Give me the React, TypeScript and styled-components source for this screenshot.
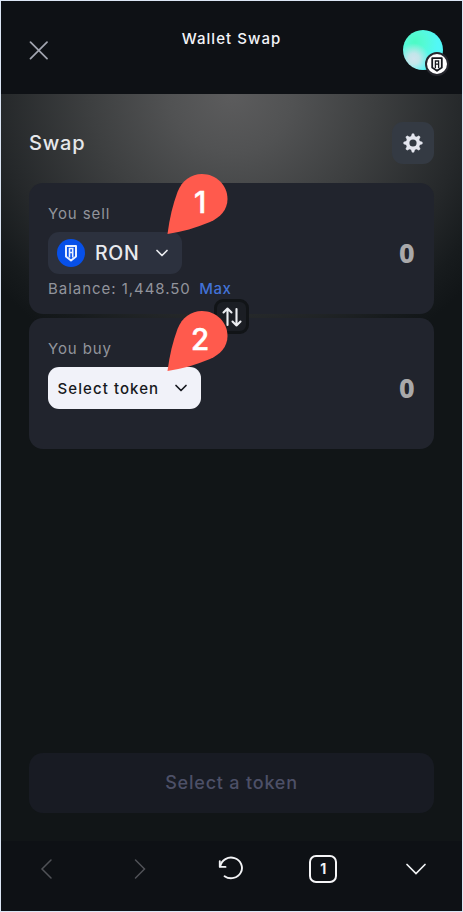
import React from "react";
import styled, { createGlobalStyle } from "styled-components";

const GlobalStyle = createGlobalStyle`
  * { box-sizing: border-box; }
  body { margin: 0; background: #10141a; }
  button { border: 0; padding: 0; margin: 0; font: inherit; color: inherit; }
  svg { display: block; flex: none; }
`;

const Screen = styled.div`
  width: 463px;
  height: 912px;
  border: 1px solid #dce6f5;
  background: #0e1115;
  display: flex;
  flex-direction: column;
  overflow: hidden;
  font-family: Inter, "Liberation Sans", sans-serif;
  color: #f3f4f8;
`;

const Header = styled.header`
  height: 93px;
  flex: none;
  display: grid;
  grid-template-columns: 60px 1fr 60px;
  background: #0e1115;
`;

const CloseButton = styled.button`
  background: none;
  padding: 40px 0 0 28px;
  align-self: start;
`;

const Title = styled.h1`
  margin: 28px 0 0;
  text-align: center;
  font-size: 15px;
  line-height: 20px;
  font-weight: 500;
  letter-spacing: 1.05px;
`;

const Avatar = styled.div`
  position: relative;
  width: 40px;
  height: 40px;
  margin-top: 29px;
  margin-left: 1px;
  border-radius: 50%;
  background:
    radial-gradient(circle at 27% 72%, #cfe4ee 0, #c2e6ea 13%, transparent 38%),
    radial-gradient(circle at 30% 30%, #4dfac4 0, #55fad5 24%, transparent 58%),
    #52f7f7;
`;

const AvatarBadge = styled.span`
  position: absolute;
  left: 22px;
  top: 22px;
  width: 24px;
  height: 24px;
  border: 2px solid #25262d;
  border-radius: 50%;
  background: #fff;
  display: grid;
  place-items: center;
`;

const Content = styled.main`
  height: 747px;
  flex: none;
  padding: 28px 28px 28px;
  display: flex;
  flex-direction: column;
  background: radial-gradient(ellipse 310px 295px at 50% 0, #5c5c5d 0%, #515253 20%, #3d3f40 46%, #25282a 75%, #171b1d 90%, #111517 100%);
`;

const TitleRow = styled.div`
  display: flex;
  justify-content: space-between;
  align-items: center;
  height: 42px;
  margin-bottom: 19px;
`;

const Heading = styled.h2`
  margin: 0;
  font-size: 20px;
  line-height: 28px;
  font-weight: 500;
  letter-spacing: 0.8px;
  color: #e6e7ea;
`;

const SettingsButton = styled.button`
  width: 42px;
  height: 42px;
  margin-right: 0.5px;
  border-radius: 11px;
  background: #343a43;
  display: grid;
  place-items: center;
`;

const Panels = styled.div`
  position: relative;
  display: flex;
  flex-direction: column;
  gap: 4px;
`;

const Panel = styled.section`
  height: 131px;
  border-radius: 14px;
  background: #21242d;
  padding: 21px 20px 0 19px;
  display: flex;
  justify-content: space-between;
`;

const PanelInfo = styled.div`
  display: flex;
  flex-direction: column;
  align-items: flex-start;
`;

const Label = styled.span`
  font-size: 15px;
  line-height: 20px;
  letter-spacing: 0.9px;
  color: #92949c;
`;

const TokenButton = styled.button<{ $light?: boolean }>`
  margin-top: 8px;
  width: ${(p) => (p.$light ? 153 : 134)}px;
  height: 42px;
  border-radius: 11px;
  display: flex;
  align-items: center;
  padding: 0 13px 0 9px;
  background: ${(p) => (p.$light ? "#f1f2f9" : "#2c313e")};
  color: ${(p) => (p.$light ? "#171920" : "#e9eaee")};
`;

const TokenName = styled.span<{ $placeholder?: boolean }>`
  flex: 1;
  text-align: left;
  white-space: nowrap;
  margin-left: ${(p) => (p.$placeholder ? 0.5 : 10)}px;
  font-size: ${(p) => (p.$placeholder ? 15 : 19.5)}px;
  font-weight: 500;
  letter-spacing: ${(p) => (p.$placeholder ? 1.08 : 0.7)}px;
`;

const BalanceRow = styled.div`
  display: flex;
  margin-top: 5px;
  gap: 8.5px;
  font-size: 15px;
  line-height: 20px;
  letter-spacing: 0.96px;
  color: #92949c;
  white-space: nowrap;
`;

const MaxLink = styled.span`
  color: #4272d6;
  font-weight: 500;
  letter-spacing: 0.55px;
`;

const Amount = styled.span`
  margin: 31px -0.5px 0 0;
  font-family: "Noto Sans", sans-serif;
  font-weight: 800;
  font-size: 27px;
  line-height: 36px;
  color: #a9a9aa;
`;

const SwitchButton = styled.button`
  position: absolute;
  left: 185px;
  top: 116px;
  width: 35px;
  height: 35px;
  border-radius: 9px;
  background: #1b1e24;
  border: 3px solid #111417;
  display: grid;
  place-items: center;
`;

const Marker = styled.div<{ $top: number }>`
  position: absolute;
  left: 138px;
  top: ${(p) => p.$top}px;
  width: 60px;
  height: 61px;
`;

const MarkerNumber = styled.span`
  position: absolute;
  left: 18px;
  top: 11px;
  width: 30px;
  text-align: center;
  font: 500 29.5px/34px Inter, sans-serif;
  color: #fff;
  -webkit-text-stroke: 0.5px #fff;
`;

const SubmitButton = styled.button`
  margin-top: auto;
  height: 60px;
  flex: none;
  padding-bottom: 2px;
  border-radius: 14px;
  background: #181b23;
  color: #4d5067;
  font-size: 18px;
  font-weight: 500;
  letter-spacing: 0.8px;
`;

const NavBar = styled.nav`
  flex: 1;
  display: grid;
  grid-template-columns: repeat(5, 92.2px);
  background: #0e1115;
`;

const NavItem = styled.button<{ $dim?: boolean }>`
  background: none;
  height: 56px;
  display: grid;
  place-items: center;
  color: ${(p) => (p.$dim ? "#505257" : "#f2f3f5")};
`;

const TabCount = styled.span`
  width: 28px;
  height: 28px;
  margin-right: 1px;
  border: 2px solid #f5f5f7;
  border-radius: 7px;
  display: grid;
  place-items: center;
  font: 700 14px/20px Inter, sans-serif;
`;

const Chevron = () => (
  <svg width="14" height="14" viewBox="0 0 14 14" fill="none" stroke="currentColor" strokeWidth="1.7" strokeLinecap="round" strokeLinejoin="round">
    <path d="M2 4.500 7 9.500l5-5" />
  </svg>
);

const AvatarShield = () => (
  <svg width="12" height="15" viewBox="0 0 12 15" fill="none" stroke="#17191e">
    <path d="M1.200 1.200h9.600v9.300L6 13.800 1.200 10.500z" strokeWidth="1.800" strokeLinejoin="round" />
    <path d="M4.400 11V4h3.200v3.200H4.400M7.600 7.200V11" strokeWidth="1.300" />
  </svg>
);

const TokenLogo = () => (
  <svg width="28" height="28" viewBox="0 0 28 28">
    <circle cx="14" cy="14" r="14" fill="#0750e9" />
    <path d="M9 7h10v10.500L14 21.500 9 17.500z" fill="none" stroke="#e7efff" strokeWidth="2" strokeLinejoin="round" />
    <path d="M12.500 18.500V9.500h3.200v4h-3M15.700 13.500v5" fill="none" stroke="#e7efff" strokeWidth="1.600" />
  </svg>
);

const Gear = () => (
  <svg width="20" height="20" viewBox="-10 -10 20 20" fill="none">
    <circle r="5.350" stroke="#e5e7ef" strokeWidth="3.500" />
    {[0, 45, 90, 135, 180, 225, 270, 315].map((angle) => (
      <path key={angle} transform={`rotate(${angle})`} d="M-2-6-.9-9.300H.9L2-6z" fill="#e5e7ef" stroke="#e5e7ef" strokeWidth=".4" />
    ))}
  </svg>
);

const SwapArrows = () => (
  <svg width="22" height="22" viewBox="0 0 22 22" fill="none" stroke="#eceef2" strokeWidth="2.100" strokeLinecap="round" strokeLinejoin="round">
    <path d="M6.500 19V2.500M2.500 6.500l4-4 4 4M15.500 3v16.500M11.500 15.500l4 4 4-4" />
  </svg>
);

const Callout = ({ top, value }: { top: number; value: string }) => (
  <Marker $top={top}>
    <svg width="61" height="61" viewBox="0 0 61 61">
      <path d="M0.5 60C2.5 44 6 30 10.5 18C15 6.5 24 0 35 0C49 0 60.5 11 60.5 25C60.5 36 53 43.5 43 48C29 54 15 57.8 .5 60Z" fill="#ff5a4d" />
    </svg>
    <MarkerNumber>{value}</MarkerNumber>
  </Marker>
);

export default function App() {
  return (
    <Screen>
      <GlobalStyle />
      <Header>
        <CloseButton aria-label="Close">
          <svg width="20" height="20" viewBox="0 0 20 20" stroke="#a2a5b0" strokeWidth="1.700" strokeLinecap="round">
            <path d="M1.500 1.200l16.500 16.500M18 1.200L1.500 17.700" />
          </svg>
        </CloseButton>
        <Title>Wallet Swap</Title>
        <Avatar>
          <AvatarBadge>
            <AvatarShield />
          </AvatarBadge>
        </Avatar>
      </Header>
      <Content>
        <TitleRow>
          <Heading>Swap</Heading>
          <SettingsButton aria-label="Settings">
            <Gear />
          </SettingsButton>
        </TitleRow>
        <Panels>
          <Panel>
            <PanelInfo>
              <Label>You sell</Label>
              <TokenButton>
                <TokenLogo />
                <TokenName>RON</TokenName>
                <Chevron />
              </TokenButton>
              <BalanceRow>
                <span>Balance: 1,448.50</span>
                <MaxLink>Max</MaxLink>
              </BalanceRow>
            </PanelInfo>
            <Amount>0</Amount>
          </Panel>
          <Panel>
            <PanelInfo>
              <Label>You buy</Label>
              <TokenButton $light>
                <TokenName $placeholder>Select token</TokenName>
                <Chevron />
              </TokenButton>
            </PanelInfo>
            <Amount>0</Amount>
          </Panel>
          <SwitchButton aria-label="Switch tokens">
            <SwapArrows />
          </SwitchButton>
          <Callout top={-9} value="1" />
          <Callout top={128} value="2" />
        </Panels>
        <SubmitButton>Select a token</SubmitButton>
      </Content>
      <NavBar>
        <NavItem $dim aria-label="Back">
          <svg width="20" height="22" viewBox="0 0 20 22" fill="none" stroke="currentColor" strokeWidth="1.500" strokeLinecap="round">
            <path d="M14 2 5 11l9 9" />
          </svg>
        </NavItem>
        <NavItem $dim aria-label="Forward">
          <svg width="20" height="22" viewBox="0 0 20 22" fill="none" stroke="currentColor" strokeWidth="1.500" strokeLinecap="round">
            <path d="M6.500 2l9 9-9 9" />
          </svg>
        </NavItem>
        <NavItem aria-label="Reload">
          <svg width="28" height="26" viewBox="0 0 28 26" fill="none" stroke="currentColor" strokeWidth="1.900" strokeLinecap="round" strokeLinejoin="round">
            <path d="M3.300 10.200A10.900 10.300 0 1 1 7.600 20.200" />
            <path d="M2.800 5.200v5.700h5.700" />
          </svg>
        </NavItem>
        <NavItem aria-label="Tabs">
          <TabCount>1</TabCount>
        </NavItem>
        <NavItem aria-label="Collapse">
          <svg width="22" height="14" viewBox="0 0 22 14" fill="none" stroke="currentColor" strokeWidth="1.700" strokeLinecap="round">
            <path d="M2 2.500l9 9 9-9" />
          </svg>
        </NavItem>
      </NavBar>
    </Screen>
  );
}
